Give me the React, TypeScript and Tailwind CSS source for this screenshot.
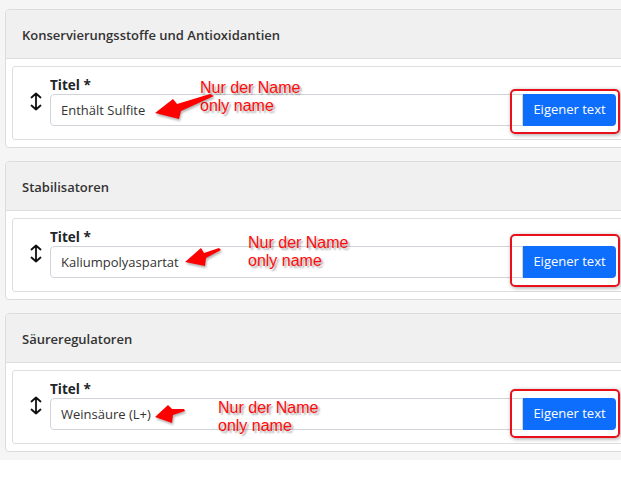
import React from 'react';

interface Section {
    title: string;
    value: string;
}

const sections: Section[] = [
    { title: 'Konservierungsstoffe und Antioxidantien', value: 'Enthält Sulfite' },
    { title: 'Stabilisatoren', value: 'Kaliumpolyaspartat' },
    { title: 'Säureregulatoren', value: 'Weinsäure (L+)' },
];

// hand-drawn screenshot notes, page coordinates
const notes = [
    { x: 200, y: 79, box: { top: 89, h: 45 } },
    { x: 248, y: 234, box: { top: 234, h: 53 } },
    { x: 218, y: 399, box: { top: 389, h: 49 } },
];

const SortIcon: React.FC = () => (
    <svg width="12" height="19" viewBox="0 0 12 19" fill="none" stroke="#111" strokeWidth="1.8" strokeLinecap="round" strokeLinejoin="round">
        <path d="M6 1.5v16M1.5 5.5 6 1.5l4.5 4M1.5 13.5l4.5 4 4.5-4" />
    </svg>
);

const AdditiveCard: React.FC<{ section: Section }> = ({ section }) => (
    <div className="w-[633px] bg-white border border-[#dcdcdc] rounded-[4px] overflow-hidden">
        {/* Header */}
        <div className="h-[49px] bg-[#f0f0f0] border-b border-[#dcdcdc] flex items-center px-4 pt-[3px] text-[13px] font-semibold text-[#333]">
            {section.title}
        </div>

        {/* Body */}
        <div className="px-[6px] py-[7px]">
            <div className="flex border border-[#dedede] rounded-[3px] pl-[17px] pr-[14px] pt-[9px] pb-[13px] gap-[8px]">
                <div className="self-end mb-[15px]">
                    <SortIcon />
                </div>
                <div className="flex-1 flex flex-col">
                    <label className="leading-[18px] text-[13.5px] font-bold text-[#212529]">Titel *</label>
                    <div className="flex h-[32px]">
                        <div className="flex-1 flex items-center border border-[#d0d4d8] rounded-l-[4px] px-[10px] pt-[1px] text-[13px] text-[#333]">
                            {section.value}
                        </div>
                        <button className="w-[93px] bg-[#0d6efd] text-white text-[13px] rounded-r-[4px]">
                            Eigener text
                        </button>
                    </div>
                </div>
            </div>
        </div>
    </div>
);

export default function App() {
    return (
        <div className="w-full min-h-screen bg-white overflow-hidden" style={{ fontFamily: '"Open Sans", "Noto Sans", sans-serif' }}>
            <div className="relative w-[640px] bg-[#f5f5f5] pt-[9px] pb-[8px] pl-[5px] flex flex-col gap-[13px]">
                {sections.map((s, i) => (
                    <AdditiveCard key={i} section={s} />
                ))}

                {/* Annotation overlay */}
                {notes.map((n, i) => (
                    <React.Fragment key={i}>
                        <div
                            className="absolute text-[16px] leading-[18px] text-[#ff0a0a] [text-shadow:2px_2px_2px_rgba(0,0,0,0.35)] pointer-events-none"
                            style={{ left: n.x, top: n.y, fontFamily: '"Liberation Sans", Arial, sans-serif' }}
                        >
                            Nur der Name<br />only name
                        </div>
                        <div
                            className="absolute left-[510px] w-[110px] border-2 border-[#e8101a] rounded-[5px] shadow-[1px_1px_4px_rgba(0,0,0,0.35)] pointer-events-none"
                            style={{ top: n.box.top, height: n.box.h }}
                        />
                    </React.Fragment>
                ))}
                <svg className="absolute left-0 top-0 w-[640px] h-[470px] pointer-events-none drop-shadow-[1px_2px_1px_rgba(0,0,0,0.3)]" viewBox="0 0 640 470">
                    <polygon fill="#ff0000" points="155,113 173,99 177,104 210,94 214,96 181,111 179,119" />
                    <polygon fill="#ff0000" points="185,262 201,248 204,253 219,248 221,250 206,258 205,266" />
                    <polygon fill="#ff0000" points="155,417 168,405 172,409 184,409 185,411 173,415 172,423" />
                </svg>
            </div>
        </div>
    );
}
